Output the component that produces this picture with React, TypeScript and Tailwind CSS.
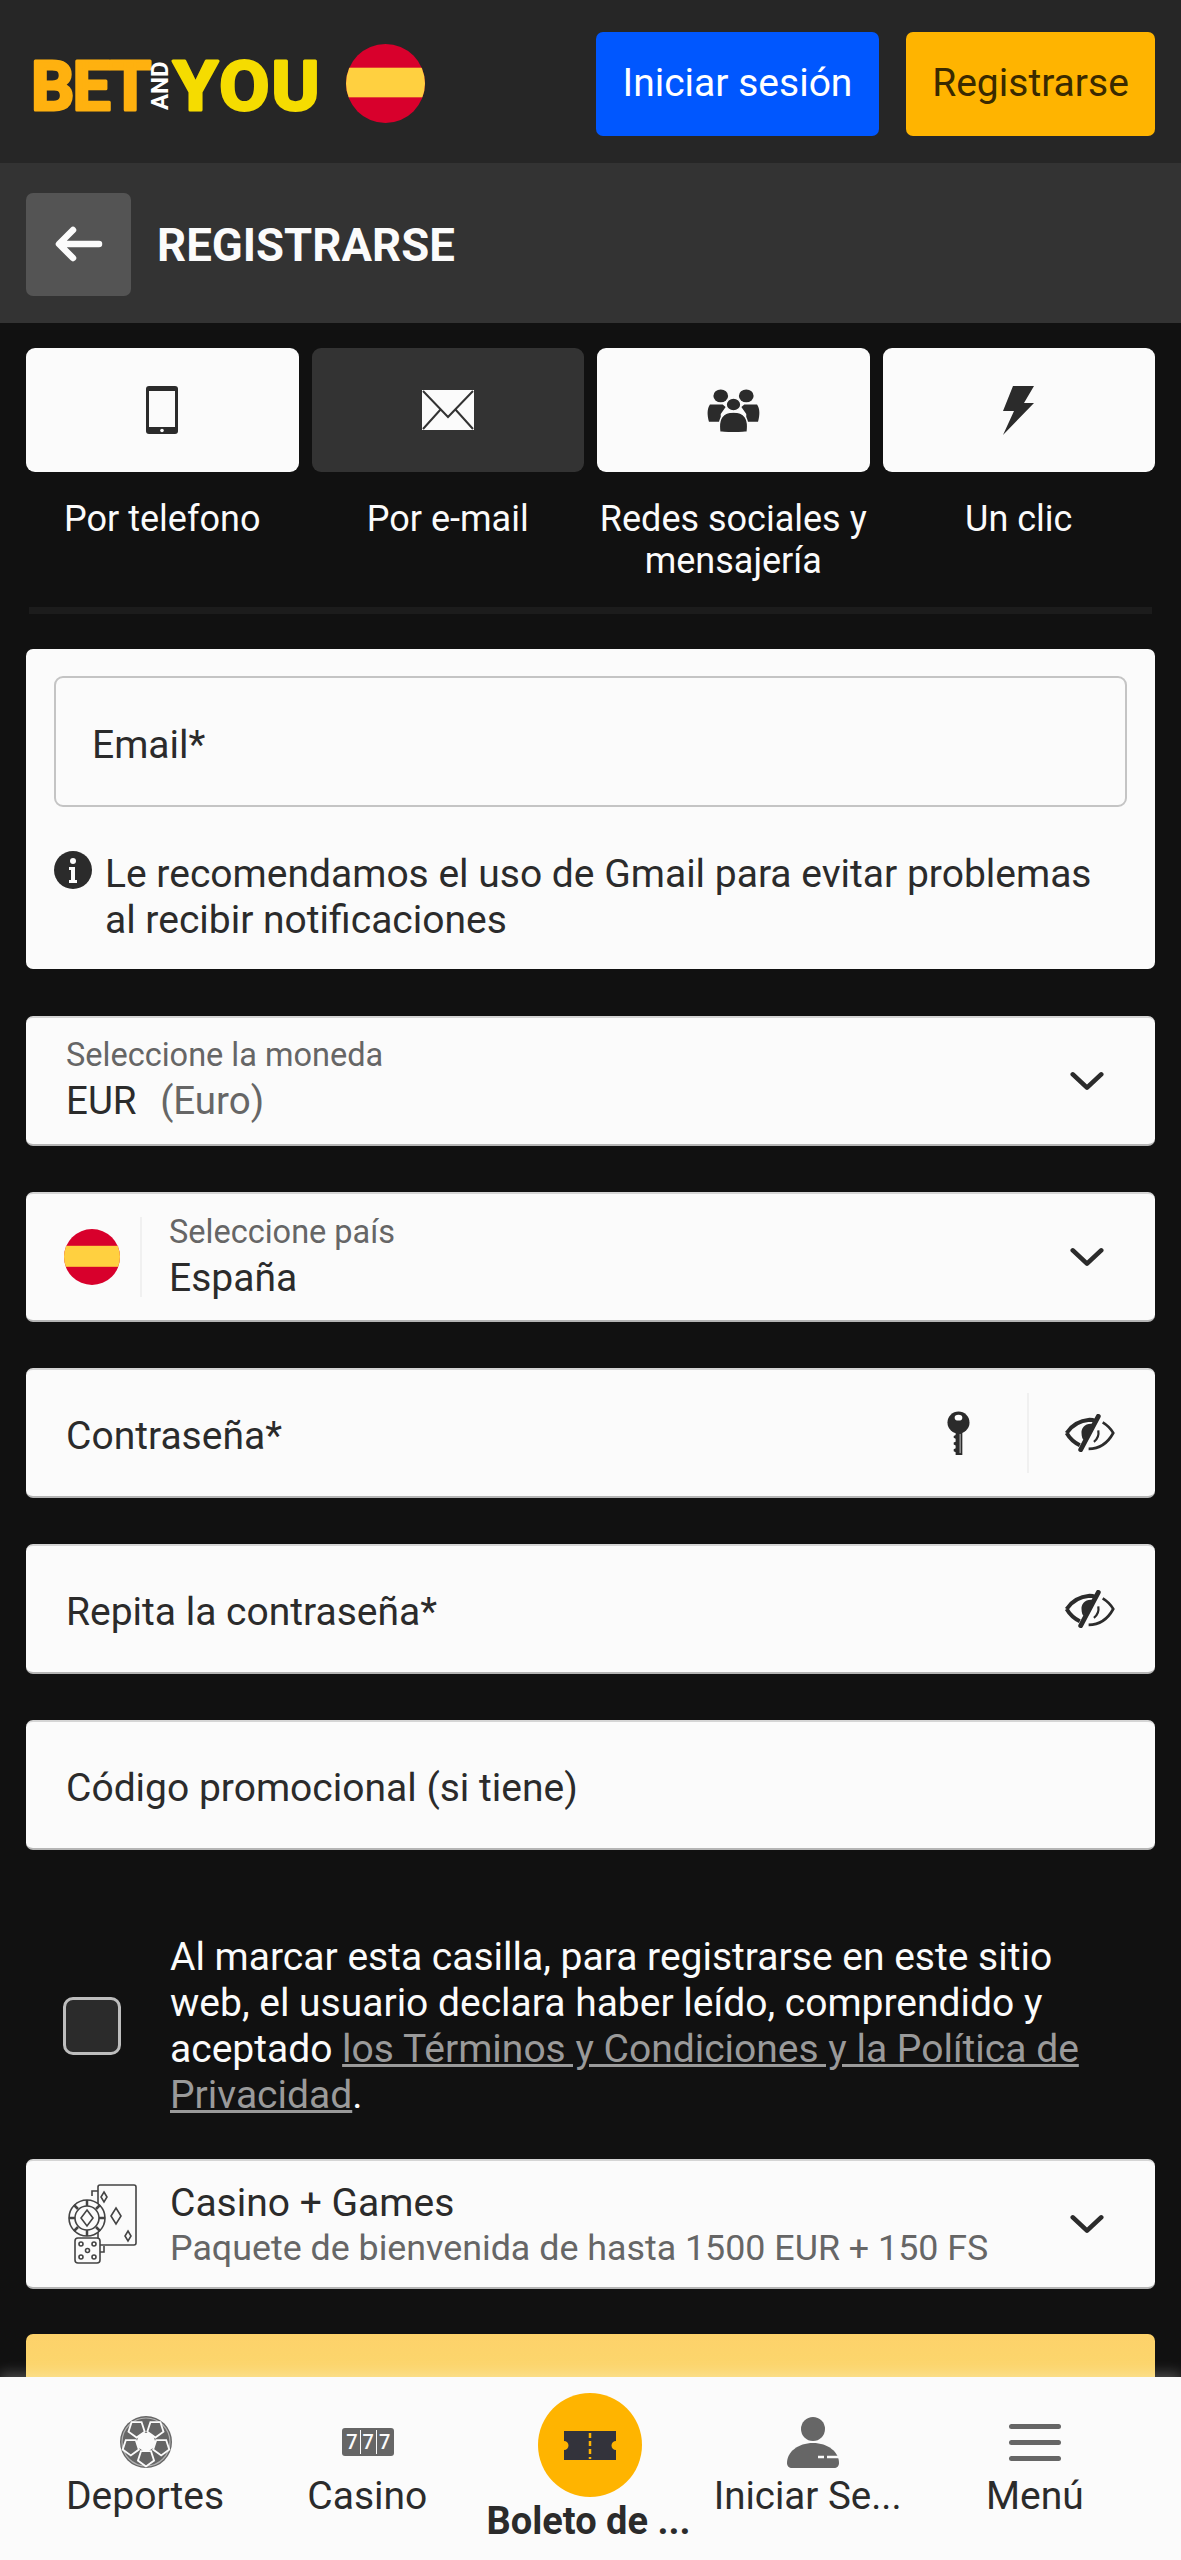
import React from 'react';

function SpainFlag({ size }: { size: number }) {
  return (
    <svg width={size} height={size} viewBox="0 0 80 80" className="shrink-0">
      <defs>
        <clipPath id="flagClip">
          <circle cx="40" cy="40" r="40" />
        </clipPath>
      </defs>
      <g clipPath="url(#flagClip)">
        <rect width="80" height="80" fill="#d8002c" />
        <rect y="24" width="80" height="30" fill="#ffd040" />
      </g>
    </svg>
  );
}

function Logo() {
  return (
    <svg width="292" height="90" viewBox="0 0 292 90" className="shrink-0">
      <text x="0" y="0" transform="translate(2 73)" fontFamily="Roboto, sans-serif" fontWeight="700" fontSize="68" letterSpacing="-2" fill="#ffb10f" stroke="#ffb10f" strokeWidth="3" strokeLinejoin="round">BET</text>
      <text x="0" y="0" transform="translate(139 73) rotate(-90)" fontFamily="Roboto, sans-serif" fontWeight="700" fontSize="24" fill="#fff">AND</text>
      <text x="0" y="0" transform="translate(144 73) scale(1.07 1)" fontFamily="Roboto, sans-serif" fontWeight="700" fontSize="68" letterSpacing="2" fill="#f5dc00" stroke="#f5dc00" strokeWidth="3" strokeLinejoin="round">YOU</text>
    </svg>
  );
}

function Chevron() {
  return (
    <svg width="34" height="20" viewBox="0 0 36 20" fill="none" className="shrink-0">
      <path d="M3 3l15 14L33 3" stroke="#2b2b2b" strokeWidth="5" strokeLinecap="round" strokeLinejoin="round" />
    </svg>
  );
}

function EyeOff() {
  return (
    <svg width="51" height="38" viewBox="0 0 58 42" fill="none" className="shrink-0">
      <path d="M3 21C9 12 18 7 29 6c2 0 4 0 6 1" stroke="#2b2b2b" strokeWidth="4.5" />
      <path d="M3 21c4 7 9 11 15 14" stroke="#2b2b2b" strokeWidth="4.5" />
      <path d="M28 39c12 0 22-7 28-18-3-5-7-9-12-12" stroke="#2b2b2b" strokeWidth="3" />
      <path d="M39 2L19 40" stroke="#2b2b2b" strokeWidth="5.5" strokeLinecap="round" />
      <path d="M34 11c-9-2-15 4-14 11 0 3 1 5 2 7z" fill="#2b2b2b" />
      <path d="M39 18c1 6-1 10-5 13" stroke="#2b2b2b" strokeWidth="2.5" />
    </svg>
  );
}

function KeyIcon() {
  return (
    <svg width="23" height="46" viewBox="0 0 24 46" className="shrink-0">
      <circle cx="12" cy="12" r="11.5" fill="#2b2b2b" />
      <ellipse cx="12" cy="7" rx="4" ry="3" fill="#fff" />
      <path d="M9 20h7v26H9v-3l-2-1v-2l2-1v-3l-2-1v-2l2-1v-3l-2-1v-2l2-1z" fill="#2b2b2b" />
      <rect x="13" y="24" width="1.5" height="20" fill="#fff" opacity=".5" />
    </svg>
  );
}

// points of a small pentagon around (cx, cy)
function pentagon(cx: number, cy: number, r: number, rot: number) {
  return [0, 1, 2, 3, 4]
    .map((i) => {
      const a = ((rot + i * 72) * Math.PI) / 180;
      return `${(cx + r * Math.cos(a)).toFixed(1)},${(cy + r * Math.sin(a)).toFixed(1)}`;
    })
    .join(' ');
}

function SoccerBall() {
  const panels = [-126, -54, 18, 90, 162];
  return (
    <svg width="52" height="52" viewBox="0 0 52 52">
      <circle cx="26" cy="26" r="26" fill="#666" />
      <circle cx="26" cy="26" r="24" fill="none" stroke="#fbfbfb" strokeWidth="1.2" opacity=".5" />
      <polygon points={pentagon(26, 26, 11, 90)} fill="#fbfbfb" />
      {panels.map((deg) => {
        const a = (deg * Math.PI) / 180;
        return (
          <polygon
            key={deg}
            points={pentagon(26 + 16 * Math.cos(a), 26 + 16 * Math.sin(a), 8.5, deg)}
            fill="#666"
            stroke="#fbfbfb"
            strokeWidth="1.8"
          />
        );
      })}
    </svg>
  );
}

function SlotsIcon() {
  return (
    <div className="w-[52px] h-[28px] bg-[#666] rounded-[3px] flex items-center justify-around px-[3px] text-[#fbfbfb] text-[20px] leading-none font-medium">
      <span>7</span>
      <span className="w-px h-[24px] bg-[#fbfbfb]" />
      <span>7</span>
      <span className="w-px h-[24px] bg-[#fbfbfb]" />
      <span>7</span>
    </div>
  );
}

function TicketIcon() {
  return (
    <svg width="52" height="29" viewBox="0 0 52 29">
      <path d="M0 0h52v10a4.5 4.5 0 0 0 0 9v10H0V19a4.5 4.5 0 0 0 0-9z" fill="#33333b" />
      <path d="M26 2v26" stroke="#ffb400" strokeWidth="2.5" strokeDasharray="5 3" />
    </svg>
  );
}

function PersonIcon() {
  return (
    <svg width="52" height="51" viewBox="0 0 52 51">
      <circle cx="26" cy="12" r="12" fill="#666" />
      <path d="M0 46c0-11 11-20 26-20s26 9 26 20c0 3-2 5-5 5H5c-3 0-5-2-5-5z" fill="#666" />
      <path d="M31 40h6M40 40h12" stroke="#fbfbfb" strokeWidth="2.5" />
    </svg>
  );
}

function CasinoIcon() {
  return (
    <svg width="70" height="80" viewBox="0 0 70 80" fill="none" stroke="#444" strokeWidth="1.6" className="shrink-0">
      <rect x="30" y="1" width="38" height="60" rx="2" />
      <path d="M24 12V7h6M36 62v6h-6" />
      <path d="M36 8l3 5-3 5-3-5zM48 24l5 8-5 8-5-8zM60 47l3 5-3 5-3-5z" />
      <circle cx="19" cy="34" r="18" fill="#fbfbfb" />
      <circle cx="19" cy="34" r="12" />
      <path d="M19 26l6 8-6 8-6-8z" />
      <path d="M19 16v6M19 46v6M1 34h6M31 34h6M6 21l4 4M28 43l4 4M32 21l-4 4M6 47l4-4" strokeWidth="2.5" />
      <rect x="7" y="54" width="25" height="25" rx="3" fill="#fbfbfb" />
      <circle cx="13" cy="60" r="2" />
      <circle cx="26" cy="60" r="2" />
      <circle cx="19.5" cy="66.5" r="2" />
      <circle cx="13" cy="73" r="2" />
      <circle cx="26" cy="73" r="2" />
    </svg>
  );
}

const tabs = [
  {
    label: 'Por telefono',
    active: false,
    icon: (
      <svg width="32" height="48" viewBox="0 0 32 48">
        <rect width="32" height="48" rx="3" fill="#2b2b2b" />
        <rect x="3" y="5" width="26" height="36" fill="#fbfbfb" />
        <circle cx="16" cy="44.5" r="1.8" fill="#fbfbfb" />
      </svg>
    ),
  },
  {
    label: 'Por e-mail',
    active: true,
    icon: (
      <svg width="52" height="40" viewBox="0 0 52 40">
        <rect width="52" height="40" fill="#fbfbfb" />
        <path d="M1 1l25 26L51 1M1 39l18-20M51 39L33 19" fill="none" stroke="#333" strokeWidth="2" />
      </svg>
    ),
  },
  {
    label: 'Redes sociales y mensajería',
    active: false,
    icon: (
      <svg width="53" height="43" viewBox="0 0 54 50" fill="#2b2b2b" preserveAspectRatio="none">
        <circle cx="14" cy="8" r="7.5" />
        <circle cx="40" cy="8" r="7.5" />
        <path d="M3 18h13l3 3-5 8v9H2c-2-8-2-15 1-20zM51 18H38l-3 3 5 8v9h12c2-8 2-15-1-20z" />
        <circle cx="27" cy="18" r="7.5" stroke="#fbfbfb" strokeWidth="1.5" />
        <path d="M13 50c-2-16 3-23 14-23s16 7 14 23c-8 1-20 1-28 0z" stroke="#fbfbfb" strokeWidth="1.5" />
      </svg>
    ),
  },
  {
    label: 'Un clic',
    active: false,
    icon: (
      <svg width="31" height="49" viewBox="0 0 31 49">
        <path d="M10 0H31L21 17H31L0 49L11 25H0z" fill="#2b2b2b" />
      </svg>
    ),
  },
];

const navItems = [
  { label: 'Deportes', icon: <SoccerBall /> },
  { label: 'Casino', icon: <SlotsIcon /> },
];

const fieldClass = 'bg-[#fbfbfb] rounded-[7px] border-t-2 border-b-2 border-t-[#d5d5d5] border-b-[#b5b5b5] h-[130px] flex items-center shrink-0';

export default function App() {
  return (
    <div className="w-[1181px] h-[2560px] flex flex-col overflow-hidden bg-[#111111] font-[Roboto,sans-serif] text-[#2b2b2b]">
      <header className="h-[163px] shrink-0 bg-[#262626] flex items-center pl-[29px] pr-[26px]">
        <Logo />
        <div className="ml-[25px] mt-[3px]">
          <SpainFlag size={79} />
        </div>
        <div className="ml-auto mt-[4px] flex gap-[27px]">
          <button className="w-[283px] h-[104px] rounded-[7px] bg-[#0057ff] text-white text-[39px]">Iniciar sesión</button>
          <button className="w-[249px] h-[104px] rounded-[7px] bg-[#ffb400] text-[#3a2a00] text-[39px]">Registrarse</button>
        </div>
      </header>

      <div className="h-[160px] shrink-0 bg-[#333333] flex items-center pl-[26px] pt-[2px] gap-[26px]">
        <button className="w-[105px] h-[103px] rounded-[7px] bg-[#545454] flex items-center justify-center">
          <svg width="48" height="36" viewBox="0 0 48 36" fill="none" stroke="#fbfbfb" strokeWidth="6.5" strokeLinecap="round" strokeLinejoin="round">
            <path d="M44 18H6M18 4L4 18l14 14" />
          </svg>
        </button>
        <h1 className="mt-[4px] text-[45.5px] font-bold text-[#fbfbfb]">REGISTRARSE</h1>
      </div>

      <main className="flex-1 min-h-0 overflow-hidden px-[26px] pt-[25px] flex flex-col">
        <div className="grid grid-cols-4 gap-[13px] shrink-0">
          {tabs.map((tab) => (
            <div key={tab.label} className="flex flex-col items-center">
              <div className={`w-full h-[124px] rounded-[9px] flex items-center justify-center ${tab.active ? 'bg-[#333333]' : 'bg-[#fbfbfb]'}`}>
                {tab.icon}
              </div>
              <span className="mt-[26px] text-[36px] leading-[42px] text-[#fbfbfb] text-center">{tab.label}</span>
            </div>
          ))}
        </div>

        <div className="mx-[3px] mt-[25px] h-[7px] shrink-0 bg-[#1c1c1c]" />

        <section className="mt-[35px] h-[320px] shrink-0 bg-[#fbfbfb] rounded-[7px] px-[28px] pt-[27px]">
          <div className="h-[131px] rounded-[9px] border-2 border-[#c4c4c4] flex items-center pl-[36px] pt-[8px] text-[39px]">Email*</div>
          <div className="mt-[44px] flex gap-[13px] text-[39px] leading-[46px]">
            <svg width="38" height="38" viewBox="0 0 38 38" className="shrink-0">
              <circle cx="19" cy="19" r="19" fill="#2b2b2b" />
              <circle cx="19" cy="10" r="3" fill="#fbfbfb" />
              <path d="M15 16h6v13h2v3h-8v-3h2V19h-2z" fill="#fbfbfb" />
            </svg>
            <p>Le recomendamos el uso de Gmail para evitar problemas al recibir notificaciones</p>
          </div>
        </section>

        <div className="mt-[47px] flex flex-col gap-[46px] shrink-0">
          <div className={`${fieldClass} pl-[40px] pr-[51px]`}>
            <div className="flex-1 pb-[3px]">
              <div className="text-[32.5px] leading-[40px] text-[#666666]">Seleccione la moneda</div>
              <div className="mt-[3px] text-[38.5px] leading-[46px]">EUR <span className="ml-[14px] text-[#666666]">(Euro)</span></div>
            </div>
            <Chevron />
          </div>

          <div className={`${fieldClass} pl-[38px] pr-[51px]`}>
            <SpainFlag size={56} />
            <div className="w-[2px] h-[80px] ml-[20px] mr-[27px] bg-[#f0f0f0]" />
            <div className="flex-1 pb-[2px]">
              <div className="text-[32.5px] leading-[40px] text-[#666666]">Seleccione país</div>
              <div className="mt-[3px] text-[39px] leading-[46px]">España</div>
            </div>
            <Chevron />
          </div>

          <div className={`${fieldClass} pl-[40px] pr-[40px]`}>
            <span className="flex-1 pt-[6px] text-[39px]">Contraseña*</span>
            <KeyIcon />
            <div className="w-[2px] h-[80px] ml-[57px] mr-[35px] bg-[#f0f0f0]" />
            <EyeOff />
          </div>

          <div className={`${fieldClass} pl-[40px] pr-[40px]`}>
            <span className="flex-1 pt-[6px] text-[39px]">Repita la contraseña*</span>
            <EyeOff />
          </div>

          <div className={`${fieldClass} pl-[40px] pr-[40px]`}>
            <span className="flex-1 pt-[6px] text-[39px]">Código promocional (si tiene)</span>
          </div>
        </div>

        <div className="mt-[84px] flex items-center shrink-0 text-[#fbfbfb]">
          <div className="w-[58px] h-[58px] ml-[37px] shrink-0 rounded-[10px] border-[3px] border-[#bdbdbd] bg-[#2b2b2b]" />
          <p className="ml-[49px] mr-[60px] text-[39px] leading-[46px]">
            Al marcar esta casilla, para registrarse en este sitio web, el usuario declara haber leído, comprendido y aceptado{' '}
            <span className="text-[#9a9a9a] underline">los Términos y Condiciones y la Política de Privacidad</span>.
          </p>
        </div>

        <div className={`${fieldClass} mt-[41px] pl-[42px] pr-[51px] gap-[32px]`}>
          <CasinoIcon />
          <div className="flex-1 pt-[3px]">
            <div className="text-[39px] leading-[46px]">Casino + Games</div>
            <div className="text-[35.8px] leading-[45px] text-[#666666]">Paquete de bienvenida de hasta 1500 EUR + 150 FS</div>
          </div>
          <Chevron />
        </div>

        <div className="mt-[45px] h-[104px] shrink-0 rounded-[7px] bg-gradient-to-b from-[#fdd26a] to-[#f8dd70]" />
      </main>

      <nav className="relative z-10 h-[183px] shrink-0 bg-[#fbfbfb] shadow-[0_-4px_12px_rgba(255,255,255,0.25)] grid grid-cols-5 px-[35px]">
        {navItems.map((item) => (
          <div key={item.label} className="flex flex-col items-center pt-[38px]">
            <div className="h-[54px] flex items-center justify-center">{item.icon}</div>
            <span className="mt-[4px] mr-[2px] text-[39px] leading-[46px]">{item.label}</span>
          </div>
        ))}
        <div className="flex flex-col items-center pt-[16px]">
          <div className="w-[104px] h-[104px] rounded-full bg-[#ffb400] flex items-center justify-center">
            <TicketIcon />
          </div>
          <span className="mt-[1px] mr-[4px] text-[38px] leading-[46px] font-bold whitespace-nowrap">Boleto de ...</span>
        </div>
        <div className="flex flex-col items-center pt-[38px]">
          <div className="h-[54px] flex items-center justify-center"><PersonIcon /></div>
          <span className="mt-[4px] mr-[10px] text-[38.5px] leading-[46px] whitespace-nowrap">Iniciar Se...</span>
        </div>
        <div className="flex flex-col items-center pt-[38px]">
          <div className="h-[54px] flex flex-col justify-center gap-[11px]">
            <span className="block w-[52px] h-[5px] rounded-full bg-[#666]" />
            <span className="block w-[52px] h-[5px] rounded-full bg-[#666]" />
            <span className="block w-[52px] h-[5px] rounded-full bg-[#666]" />
          </div>
          <span className="mt-[4px] text-[39px] leading-[46px]">Menú</span>
        </div>
      </nav>
    </div>
  );
}
